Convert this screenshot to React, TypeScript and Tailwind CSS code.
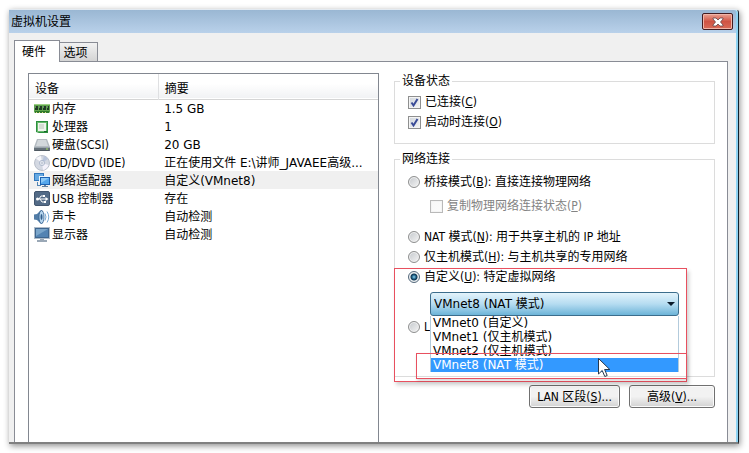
import { useState, type ReactNode } from "react";

const devices = [
  { id: "memory", name: "内存", summary: "1.5 GB" },
  { id: "cpu", name: "处理器", summary: "1" },
  { id: "disk", name: "硬盘(SCSI)", summary: "20 GB" },
  { id: "cd", name: "CD/DVD (IDE)", summary: "正在使用文件 E:\\讲师_JAVAEE高级..." },
  { id: "network", name: "网络适配器", summary: "自定义(VMnet8)" },
  { id: "usb", name: "USB 控制器", summary: "存在" },
  { id: "sound", name: "声卡", summary: "自动检测" },
  { id: "display", name: "显示器", summary: "自动检测" },
];

const networks = [
  "VMnet0 (自定义)",
  "VMnet1 (仅主机模式)",
  "VMnet2 (仅主机模式)",
  "VMnet8 (NAT 模式)",
];

function DeviceIcon({ id }: { id: string }) {
  return (
    <svg viewBox="0 0 16 16" className="h-4 w-4 shrink-0" aria-hidden="true">
      {id === "memory" && (
        <>
          <path d="M0 3h16v8.500H0z" fill="#5fa54c" />
          <path d="M0 3h16v1H0z" fill="#9ccf86" />
          <path d="M1 5h3v4H1zM5 5h3v4H5zM9 5h3v4H9zM13 5h2v4h-2z" fill="#1f3a24" />
          <path d="M1 5h1v2H1zM5 5h1v2H5zM9 5h1v2H9zM13 5h1v2h-1z" fill="#64836a" />
          <path d="M1 10h14v2H1z" fill="#2f7a2c" />
          <path d="M2 11h1v1H2zM5 11h1v1H5zM8 11h1v1H8zM11 11h1v1h-1z" fill="#dcd87b" />
        </>
      )}
      {id === "cpu" && (
        <>
          <path d="M2 2h12v12H2z" fill="#2c8f3e" />
          <path d="M3 3h10v10H3z" fill="#68b96c" />
          <path d="M4 4h8v8H4z" fill="#f0f4ee" />
          <path d="M5 5h5v5H5z" fill="#d5ddd3" />
          <path d="M2 13l3 1H2z" fill="#fff" />
          <path d="M10 12h3v1h-3z" fill="#17692a" />
        </>
      )}
      {id === "disk" && (
        <>
          <path d="M3 2h10l3 8H0z" fill="#b4bbc1" />
          <path d="M4 3h8l2 6H2z" fill="#d3d8dc" />
          <path d="M0 10h16v4H0z" fill="#66717a" />
          <path d="M0 10h16v1H0z" fill="#9ba5ad" />
          <path d="M1 13h14v1H1z" fill="#4f5961" />
          <path d="M12 11.500h2v1h-2z" fill="#a5e060" />
        </>
      )}
      {id === "cd" && (
        <>
          <circle cx="8" cy="8" r="7.500" fill="#d3d8e2" stroke="#a5acba" strokeWidth=".7" />
          <path d="M8 8L2 3.500A7 7 0 0 1 7 1z" fill="#f7f7fb" />
          <path d="M8 8l6.500 2A7 7 0 0 1 9 15z" fill="#f4f2fb" />
          <path d="M8 8L14 4a7 7 0 0 0-4-3z" fill="#b9c5dc" />
          <circle cx="8" cy="8" r="2.600" fill="#eef1f6" stroke="#9ba8c0" strokeWidth=".7" />
          <circle cx="8" cy="8" r="1" fill="#fff" stroke="#8291ad" strokeWidth=".5" />
        </>
      )}
      {id === "network" && (
        <>
          <path d="M0 0h10v8H0z" fill="#3278bd" />
          <path d="M1 1h8v6H1z" fill="#65a9e3" />
          <path d="M2 9h2v3h3v1H3V9z" fill="#5486b5" />
          <path d="M5 3h11v9H5z" fill="#eaf4fc" />
          <path d="M6 4h10v8H6z" fill="#1c63b2" />
          <path d="M7 5h8v6H7z" fill="#55a7ec" />
          <path d="M7 5h8l-8 5z" fill="#8cc9f6" />
          <path d="M10 12h2v1h2v1H8v-1h2z" fill="#5f7f9f" />
        </>
      )}
      {id === "usb" && (
        <>
          <rect x=".5" y=".5" width="15" height="14" rx="1.500" fill="#536b87" stroke="#42566f" />
          <path d="M3 8h9M5 8l2-3h2M6 8l2 3h2" fill="none" stroke="#fff" strokeWidth="1" />
          <circle cx="3.500" cy="8" r="1.500" fill="#fff" />
          <path d="M11.500 6l3 2-3 2zM9 4h2v2H9zM10 10h2v2h-2z" fill="#fff" />
        </>
      )}
      {id === "sound" && (
        <>
          <path d="M0 5.500L3 5l4-4 2 1v12l-2 1-4-4-3-.5z" fill="#527da7" />
          <ellipse cx="7.500" cy="8" rx="2.500" ry="6.500" fill="#b6d5ee" stroke="#34618f" strokeWidth=".8" />
          <ellipse cx="7.500" cy="8" rx="1" ry="3" fill="#315e8c" />
          <path d="M11 4.500q2 3.500 0 7M13 2.500q3.500 5.500 0 11" fill="none" stroke="#79aad5" strokeWidth="1" />
        </>
      )}
      {id === "display" && (
        <>
          <path d="M0 0h16v12H0z" fill="#aebbc8" />
          <path d="M1 1h14v10H1z" fill="#3f668f" />
          <path d="M2 2h12v8H2z" fill="#5383b2" />
          <path d="M2 2h12L2 9z" fill="#7aa5ca" />
          <path d="M6 12h4v1h3v2H3v-2h3z" fill="#9aa8b6" />
        </>
      )}
    </svg>
  );
}

type OptionProps = {
  children: ReactNode;
  label?: string;
  checked?: boolean;
  disabled?: boolean;
  onChange?: () => void;
};

function CheckOption({ children, checked, disabled, onChange }: OptionProps) {
  return (
    <label className={`flex h-5 items-center gap-1 ${disabled ? "text-[#838383]" : ""}`}>
      <span className="grid shrink-0 place-items-center">
        <input
          type="checkbox"
          checked={checked}
          disabled={disabled}
          onChange={onChange}
          className="col-start-1 row-start-1 h-[13px] w-[13px] appearance-none border border-[#8e8f8f] bg-linear-to-br from-[#cfd5dc] to-[#f6f6f6] shadow-[inset_0_0_0_1px_#f4f4f4] disabled:border-[#b9b9b9] disabled:from-[#f8f8f8] disabled:to-[#fbfbfb]"
        />
        {checked && (
          <svg viewBox="0 0 13 13" className="pointer-events-none col-start-1 row-start-1 h-[13px] w-[13px]" aria-hidden="true">
            <path d="M3.500 6.500l2 3L9.500 3" fill="none" stroke="#3a4b97" strokeWidth="2" />
          </svg>
        )}
      </span>
      <span className="whitespace-nowrap">{children}</span>
    </label>
  );
}

function RadioOption({ children, label, checked, onChange }: OptionProps) {
  return (
    <label className="flex h-5 items-center gap-1">
      <input
        type="radio"
        name="connection"
        aria-label={label}
        checked={checked}
        onChange={onChange}
        className="h-3 w-3 shrink-0 appearance-none rounded-full border border-[#8e8f8f] bg-linear-to-br from-[#c4c8cc] to-[#f5f5f5] shadow-[inset_0_0_0_1px_#f1f1f1] checked:border-[#55697c] checked:bg-[radial-gradient(circle_at_5px_5px,#8fd3ee_0,#1d5f86_2px,#123550_3px,#dfe9ef_4px)]"
      />
      <span className="whitespace-nowrap">{children}</span>
    </label>
  );
}

function PushButton({ children, className }: { children: ReactNode; className: string }) {
  return (
    <button
      type="button"
      className={`h-[23px] rounded-[3px] border border-[#707070] bg-linear-to-b from-[#f2f2f2] from-50% to-[#d2d2d2] whitespace-nowrap shadow-[inset_0_0_0_1px_#fbfbfb] ${className}`}
    >
      {children}
    </button>
  );
}

export default function App() {
  const [connected, setConnected] = useState(true);
  const [autoConnect, setAutoConnect] = useState(true);
  const [mode, setMode] = useState("custom");
  const [network, setNetwork] = useState("VMnet8 (NAT 模式)");

  return (
    <div className="flex min-h-screen bg-white pt-[9px] pr-2.5 pb-[9px] pl-[9px] font-['DejaVu_Sans_Condensed','Noto_Sans_CJK_SC',sans-serif] text-xs leading-4 text-black">
      <main className="flex min-w-0 flex-1 flex-col rounded-tr border-t border-r border-b-2 border-t-[#e3eaf1] border-r-[#10212c] border-b-[#808080] bg-[#f0f0f0] shadow-[1px_2px_6px_#00000070]">
        {/* Title bar */}
        <header className="flex h-[23px] items-center justify-between rounded-tr border-r-2 border-[#8ed3f2] bg-linear-to-b from-[#9ab7d3] to-[#b9d1ea] pr-[3px] pl-0.5">
          <h1>虚拟机设置</h1>
          <button
            type="button"
            aria-label="关闭"
            className="flex h-[17px] w-[31px] items-center justify-center rounded-xs border border-[#431c20] bg-linear-to-b from-[#e9a293] via-[#cf5344] via-50% to-[#d96b58] shadow-[inset_0_0_0_1px_#f0b5a8]"
          >
            <svg viewBox="0 0 12 10" className="h-2.5 w-3" aria-hidden="true">
              <path d="M1 1h3l2 2 2-2h3v1L8.500 5 11 8v1H8L6 7 4 9H1V8l2.500-3L1 2z" fill="#fff" stroke="#654448" strokeWidth=".8" />
            </svg>
          </button>
        </header>

        <div className="flex flex-1 flex-col border-r-2 border-[#8ed3f2] pt-[7px] pr-2 pl-[5px]">
          <div role="tablist" className="flex items-end">
            <button type="button" role="tab" aria-selected="true" className="relative -mb-px h-[22px] w-[46px] border border-b-0 border-[#898c95] bg-white pr-1.5">
              硬件
            </button>
            <button type="button" role="tab" aria-selected="false" className="h-[19px] w-[38px] border-t border-r border-[#898c95] bg-linear-to-b from-[#f2f2f2] to-[#d4d4d4] pt-px pr-1.5">
              选项
            </button>
          </div>

          <div className="grid flex-1 grid-cols-[351fr_321fr] gap-[15px] border border-b-0 border-[#898c95] bg-white pt-[11px] pr-3 pl-[13px]">
            {/* Device list */}
            <div className="min-w-0 border border-b-0 border-[#828790]">
              <table className="w-full table-fixed border-collapse text-left">
                <colgroup>
                  <col className="w-[37%]" />
                  <col />
                </colgroup>
                <thead>
                  <tr className="h-[25px] border-b border-[#d5d5d5] bg-linear-to-b from-white from-40% to-[#f1f2f4]">
                    <th className="border-r border-[#dfe0e2] pt-1.5 pl-1.5 font-normal">设备</th>
                    <th className="pt-1.5 pl-1.5 font-normal">摘要</th>
                  </tr>
                </thead>
                <tbody>
                  {devices.map((device) => (
                    <tr key={device.id} className={`h-[18px] ${device.id === "network" ? "bg-[#f0f0f0]" : ""}`}>
                      <td className="p-0 pt-px pl-[5px]">
                        <span className="flex items-center gap-0.5 whitespace-nowrap">
                          <DeviceIcon id={device.id} />
                          {device.name}
                        </span>
                      </td>
                      <td className="p-0 pt-px pl-1.5 font-['DejaVu_Sans','Noto_Sans_CJK_SC',sans-serif] whitespace-nowrap">
                        {device.summary}
                      </td>
                    </tr>
                  ))}
                </tbody>
              </table>
            </div>

            {/* Settings of the selected device */}
            <div className="min-w-0">
              <fieldset className="border border-[#dcdcdc] px-[13px] pt-[3px] pb-[11px]">
                <legend className="-ml-2 px-0.5">设备状态</legend>
                <CheckOption checked={connected} onChange={() => setConnected(!connected)}>
                  已连接(<u>C</u>)
                </CheckOption>
                <CheckOption checked={autoConnect} onChange={() => setAutoConnect(!autoConnect)}>
                  启动时连接(<u>O</u>)
                </CheckOption>
              </fieldset>

              <fieldset className="mt-[7px] border border-[#dcdcdc] px-[13px] pt-[5px] pb-[39px]">
                <legend className="-ml-2 px-0.5">网络连接</legend>
                <RadioOption checked={mode === "bridged"} onChange={() => setMode("bridged")}>
                  桥接模式(<u>B</u>): 直接连接物理网络
                </RadioOption>
                <div className="mt-1 mb-[11px] ml-[22px]">
                  <CheckOption checked={false} disabled>
                    复制物理网络连接状态(<u>P</u>)
                  </CheckOption>
                </div>
                <RadioOption checked={mode === "nat"} onChange={() => setMode("nat")}>
                  NAT 模式(<u>N</u>): 用于共享主机的 IP 地址
                </RadioOption>
                <RadioOption checked={mode === "host"} onChange={() => setMode("host")}>
                  仅主机模式(<u>H</u>): 与主机共享的专用网络
                </RadioOption>

                <div className="relative">
                  <RadioOption checked={mode === "custom"} onChange={() => setMode("custom")}>
                    自定义(<u>U</u>): 特定虚拟网络
                  </RadioOption>
                  <div className="relative mt-[5px] mr-[22px] ml-[22px] font-['DejaVu_Sans','Noto_Sans_CJK_SC',sans-serif]">
                    <select
                      aria-label="虚拟网络"
                      value={network}
                      onChange={(e) => setNetwork(e.target.value)}
                      className="block h-6 w-full appearance-none rounded-[3px] border border-[#3c6d8c] bg-linear-to-b from-[#e3f3fb] via-[#b5dcf1] via-50% to-[#6cb4d8] pl-[3px]"
                    >
                      {networks.map((name) => (
                        <option key={name}>{name}</option>
                      ))}
                    </select>
                    <svg viewBox="0 0 8 4" className="pointer-events-none absolute top-2.5 right-1 h-1 w-2" aria-hidden="true">
                      <path d="M0 0h8L4 4z" fill="#0b1a2b" />
                    </svg>
                    <ul role="listbox" aria-label="虚拟网络" className="absolute top-full right-0 left-0 z-10 border-x border-[#b3cbdc] bg-white leading-[14px]">
                      {networks.map((name) => (
                        <li
                          key={name}
                          role="option"
                          aria-selected={name === network}
                          onClick={() => setNetwork(name)}
                          className={`h-3.5 pl-0.5 ${name === network ? "bg-[#3399ff] text-white" : ""}`}
                        >
                          {name}
                        </li>
                      ))}
                    </ul>
                  </div>

                  {/* Highlight frames and pointer */}
                  <div className="pointer-events-none absolute top-px right-[14px] -left-[14px] z-20 h-[114px] border border-[#e8505f] shadow-[2px_3px_4px_#00000030]" />
                  <div className="pointer-events-none absolute top-[86px] right-[14px] left-2 z-20 h-[26px] border border-[#e8505f] shadow-[1px_2px_3px_#00000028]" />
                  <svg viewBox="0 0 13 20" className="pointer-events-none absolute top-[91px] left-[190px] z-30 h-5 w-[13px]" aria-hidden="true">
                    <path d="M.5.5v15.500l3.700-3.500 2.600 6 2.400-1-2.600-6h5.200z" fill="#fff" stroke="#26384d" />
                  </svg>
                </div>

                <div className="mt-px">
                  <RadioOption label="LAN 区段" checked={mode === "lan"} onChange={() => setMode("lan")}>
                    L
                  </RadioOption>
                </div>
              </fieldset>

              <div className="mt-2 flex justify-end gap-[9px]">
                <PushButton className="w-[91px]">
                  LAN 区段(<u>S</u>)...
                </PushButton>
                <PushButton className="w-[86px]">
                  高级(<u>V</u>)...
                </PushButton>
              </div>
            </div>
          </div>
        </div>
      </main>
    </div>
  );
}
